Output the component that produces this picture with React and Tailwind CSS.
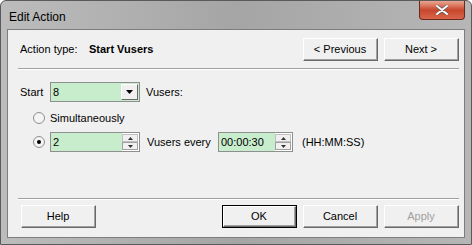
// Edit Action 对话框 - Win7 风格
import React from 'react';

const font = "font-['Liberation_Sans',Arial,sans-serif]";

// 经典 3D 按钮
const Btn = ({ label, w = 'w-[75px]', disabled, isDefault }) => (
  <div className={`${w} h-[23px] ${isDefault ? 'border border-black' : ''} flex`}>
    <div className="flex-1 flex border border-t-white border-l-white border-r-[#696969] border-b-[#696969]">
      <div className={`flex-1 flex items-center justify-center bg-[#f0f0f0] border-r border-b border-[#a0a0a0] text-[11px] ${disabled ? 'text-[#a0a0a0]' : 'text-black'}`}>
        {label}
      </div>
    </div>
  </div>
);

// 带上下箭头的数字框
const SpinField = ({ value, w }) => (
  <div className={`${w} h-[20px] flex border border-[#8e8f8f] bg-[#c8edcc]`}>
    <div className="flex-1 pl-[2px] flex items-center text-[11px] text-black">{value}</div>
    <div className="w-[17px] flex flex-col bg-white py-[1px] pr-[1px]">
      <div className="flex-1 flex items-center justify-center bg-[#f0f0f0] border border-[#c0c0c0]">
        <svg width="5" height="3" viewBox="0 0 5 3"><path d="M2.5 0 L5 3 L0 3 Z" fill="#333" /></svg>
      </div>
      <div className="flex-1 flex items-center justify-center bg-[#f0f0f0] border border-[#a0a0a0]">
        <svg width="5" height="3" viewBox="0 0 5 3"><path d="M0 0 L5 0 L2.5 3 Z" fill="#333" /></svg>
      </div>
    </div>
  </div>
);

const Radio = ({ checked }) => (
  <div className="w-[12px] h-[12px] rounded-full border border-[#8e8f8f] bg-[#f4f4f4] flex items-center justify-center">
    {checked && <div className="w-[4px] h-[4px] rounded-full bg-black" />}
  </div>
);

export default function App() {
  return (
    <div className={`w-[472px] h-[245px] flex flex-col rounded-t-[6px] border border-[#5a5a5a] bg-gradient-to-r from-[#bcbcbc] via-[#a5a5a5] to-[#b6b6b6] ${font}`}>
      {/* 标题栏 */}
      <div className="h-[28px] flex items-start justify-between">
        <span className="pl-[8px] pt-[7px] text-[12px] text-black">Edit Action</span>
        <div className="mr-[6px] w-[46px] h-[19px] rounded-b-[4px] border border-t-0 border-[#6b2a1e] bg-gradient-to-b from-[#e8a793] via-[#c8462c] to-[#d8664a] flex items-center justify-center">
          <svg width="12" height="10" viewBox="0 0 12 10">
            <path d="M1 1 L11 9 M11 1 L1 9" stroke="#555" strokeWidth="3.2" strokeLinecap="round" />
            <path d="M1 1 L11 9 M11 1 L1 9" stroke="white" strokeWidth="2" strokeLinecap="round" />
          </svg>
        </div>
      </div>

      {/* 客户区 */}
      <div className="flex-1 flex px-[6px] pb-[6px]">
        <div className="flex-1 flex flex-col border border-[#7d7d7d] bg-[#f0f0f0] text-[11px] text-black whitespace-nowrap">
          {/* 第一行 */}
          <div className="flex items-center pt-[8px] pl-[12px] pr-[5px]">
            <span className="w-[69px]">Action type:</span>
            <span className="font-bold">Start Vusers</span>
            <div className="ml-auto flex gap-[6px]">
              <Btn label="<  Previous" />
              <Btn label="Next  >" />
            </div>
          </div>
          <div className="mt-[7px] ml-[10px] mr-[5px] h-[2px] border-t border-[#a0a0a0] border-b border-b-white" />

          {/* Start 行 */}
          <div className="flex items-center mt-[12px] pl-[12px]">
            <span className="w-[30px]">Start</span>
            <div className="w-[90px] h-[20px] flex border border-[#8e8f8f] bg-[#c8edcc]">
              <div className="flex-1 pl-[2px] flex items-center">8</div>
              <div className="w-[17px] my-[1px] mr-[1px] flex items-center justify-center bg-[#f0f0f0] border border-t-white border-l-white border-r-[#696969] border-b-[#696969]">
                <svg width="7" height="4" viewBox="0 0 7 4"><path d="M0 0 L7 0 L3.5 4 Z" fill="black" /></svg>
              </div>
            </div>
            <span className="ml-[6px]">Vusers:</span>
          </div>

          <div className="flex items-center mt-[8px] h-[16px] pl-[25px]">
            <Radio />
            <span className="ml-[5px]">Simultaneously</span>
          </div>

          <div className="flex items-center mt-[6px] pl-[25px]">
            <Radio checked />
            <div className="ml-[5px] shrink-0"><SpinField value="2" w="w-[90px]" /></div>
            <span className="ml-[7px] w-[64px] shrink-0">Vusers every</span>
            <div className="ml-[7px] shrink-0"><SpinField value="00:00:30" w="w-[75px]" /></div>
            <span className="ml-[9px]">(HH:MM:SS)</span>
          </div>

          <div className="flex-1" />
          <div className="ml-[10px] mr-[5px] h-[2px] border-t border-[#a0a0a0] border-b border-b-white" />

          {/* 底部按钮 */}
          <div className="flex items-center mt-[5px] mb-[9px] pl-[13px] pr-[5px]">
            <Btn label="Help" />
            <div className="ml-auto flex gap-[6px]">
              <Btn label="OK" isDefault />
              <Btn label="Cancel" />
              <Btn label="Apply" disabled />
            </div>
          </div>
        </div>
      </div>
    </div>
  );
}
